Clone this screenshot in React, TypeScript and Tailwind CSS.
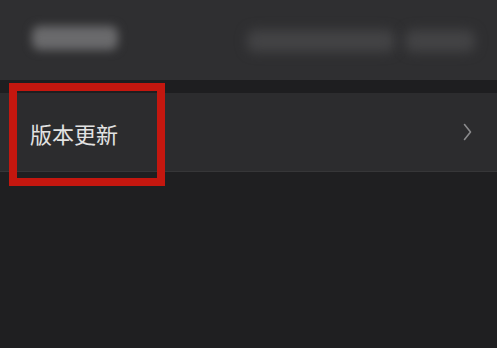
export default function App() {
  return (
    <div
      className="w-[497px] h-[348px] overflow-hidden bg-[#1f1f21] flex flex-col"
      style={{ fontFamily: '"Noto Sans CJK SC", "Noto Sans", sans-serif' }}
    >
      {/* Header (blurred) */}
      <div className="h-[80px] bg-[#2f2f31] flex items-start justify-between pl-[32px] pr-[22px] pt-[26px]">
        <div className="w-[86px] h-[24px] rounded-lg bg-[#6a6a6c] blur-[5px]" />
        <div className="flex gap-[10px] mt-[4px]">
          <div className="w-[148px] h-[22px] rounded-lg bg-[#434345] blur-[6px]" />
          <div className="w-[70px] h-[22px] rounded-lg bg-[#434345] blur-[6px]" />
        </div>
      </div>

      <div className="h-[13px] bg-[#1e1e20]" />

      {/* Row */}
      <div className="relative h-[79px] bg-[#2c2c2e] border-b border-[#363638] flex items-center justify-between pl-[30px] pr-[25px]">
        <span className="text-[22px] leading-none text-[#e2e2e2] mt-[2px]">版本更新</span>
        <svg width="9" height="18" viewBox="0 0 9 18" fill="none">
          <path d="M1.5 1.5 L7.5 9 L1.5 16.5" stroke="#8a8a8c" strokeWidth="1.6" strokeLinecap="round" strokeLinejoin="round" />
        </svg>
        {/* annotation box */}
        <div className="absolute left-[9px] top-[-10px] w-[156px] h-[103px] border-[8px] border-[#c4170f]" />
      </div>
    </div>
  );
}
